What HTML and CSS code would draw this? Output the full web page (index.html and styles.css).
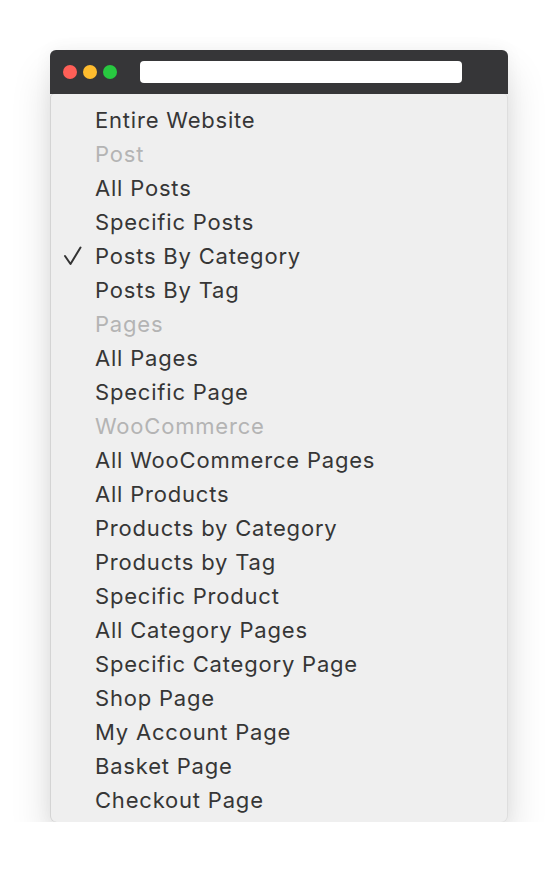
FILE: index.html
```html
<!DOCTYPE html>
<html>
<head>
<meta charset="utf-8">
<link rel="stylesheet" href="styles.css">
</head>
<body>
<div class="window">
  <div class="titlebar">
    <span class="dot red"></span>
    <span class="dot yellow"></span>
    <span class="dot green"></span>
    <span class="address"></span>
  </div>
  <ul class="menu">
    <li class="item">Entire Website</li>
    <li class="item header">Post</li>
    <li class="item">All Posts</li>
    <li class="item">Specific Posts</li>
    <li class="item checked"><svg class="check" width="22" height="22" viewBox="0 0 22 22"><polyline points="3,11 8.5,19 18.5,2.5" fill="none" stroke="#333" stroke-width="2" stroke-linecap="round" stroke-linejoin="round"/></svg>Posts By Category</li>
    <li class="item">Posts By Tag</li>
    <li class="item header">Pages</li>
    <li class="item">All Pages</li>
    <li class="item">Specific Page</li>
    <li class="item header">WooCommerce</li>
    <li class="item">All WooCommerce Pages</li>
    <li class="item">All Products</li>
    <li class="item">Products by Category</li>
    <li class="item">Products by Tag</li>
    <li class="item">Specific Product</li>
    <li class="item">All Category Pages</li>
    <li class="item">Specific Category Page</li>
    <li class="item">Shop Page</li>
    <li class="item">My Account Page</li>
    <li class="item">Basket Page</li>
    <li class="item">Checkout Page</li>
  </ul>
</div>
</body>
</html>
```
FILE: styles.css
```css
html, body {
  margin: 0;
  padding: 0;
  background: #ffffff;
}
body {
  font-family: Inter, "Noto Sans", sans-serif;
}
.window {
  margin: 50px 0 0 50px;
  width: 458px;
  border-radius: 6px;
  box-shadow: 0 24px 40px rgba(0, 0, 0, 0.14), 0 0 18px rgba(0, 0, 0, 0.05);
  background: #efefef;
}
.titlebar {
  height: 44px;
  background: #363638;
  border-radius: 6px 6px 0 0;
  display: flex;
  align-items: center;
  padding-left: 13px;
  box-sizing: border-box;
}
.dot {
  width: 14px;
  height: 14px;
  border-radius: 50%;
  margin-right: 6px;
}
.red { background: #fe5f57; }
.yellow { background: #febc2e; }
.green { background: #28c840; }
.address {
  margin-left: 17px;
  width: 322px;
  height: 22px;
  background: #ffffff;
  border-radius: 4px;
}
.menu {
  list-style: none;
  margin: 0;
  padding: 9px 0 5px 0;
  background: #efefef;
  border-radius: 4px 4px 6px 6px;
  box-shadow: inset 1px 0 0 #d4d4d4, inset -1px 0 0 #dedede;
}
.item {
  height: 34px;
  line-height: 34px;
  padding-left: 45px;
  font-size: 22px;
  letter-spacing: 0.8px;
  color: #363636;
  position: relative;
  white-space: nowrap;
}
.header {
  color: #b4b4b4;
}
.check {
  position: absolute;
  left: 12px;
  top: 6px;
}
```
